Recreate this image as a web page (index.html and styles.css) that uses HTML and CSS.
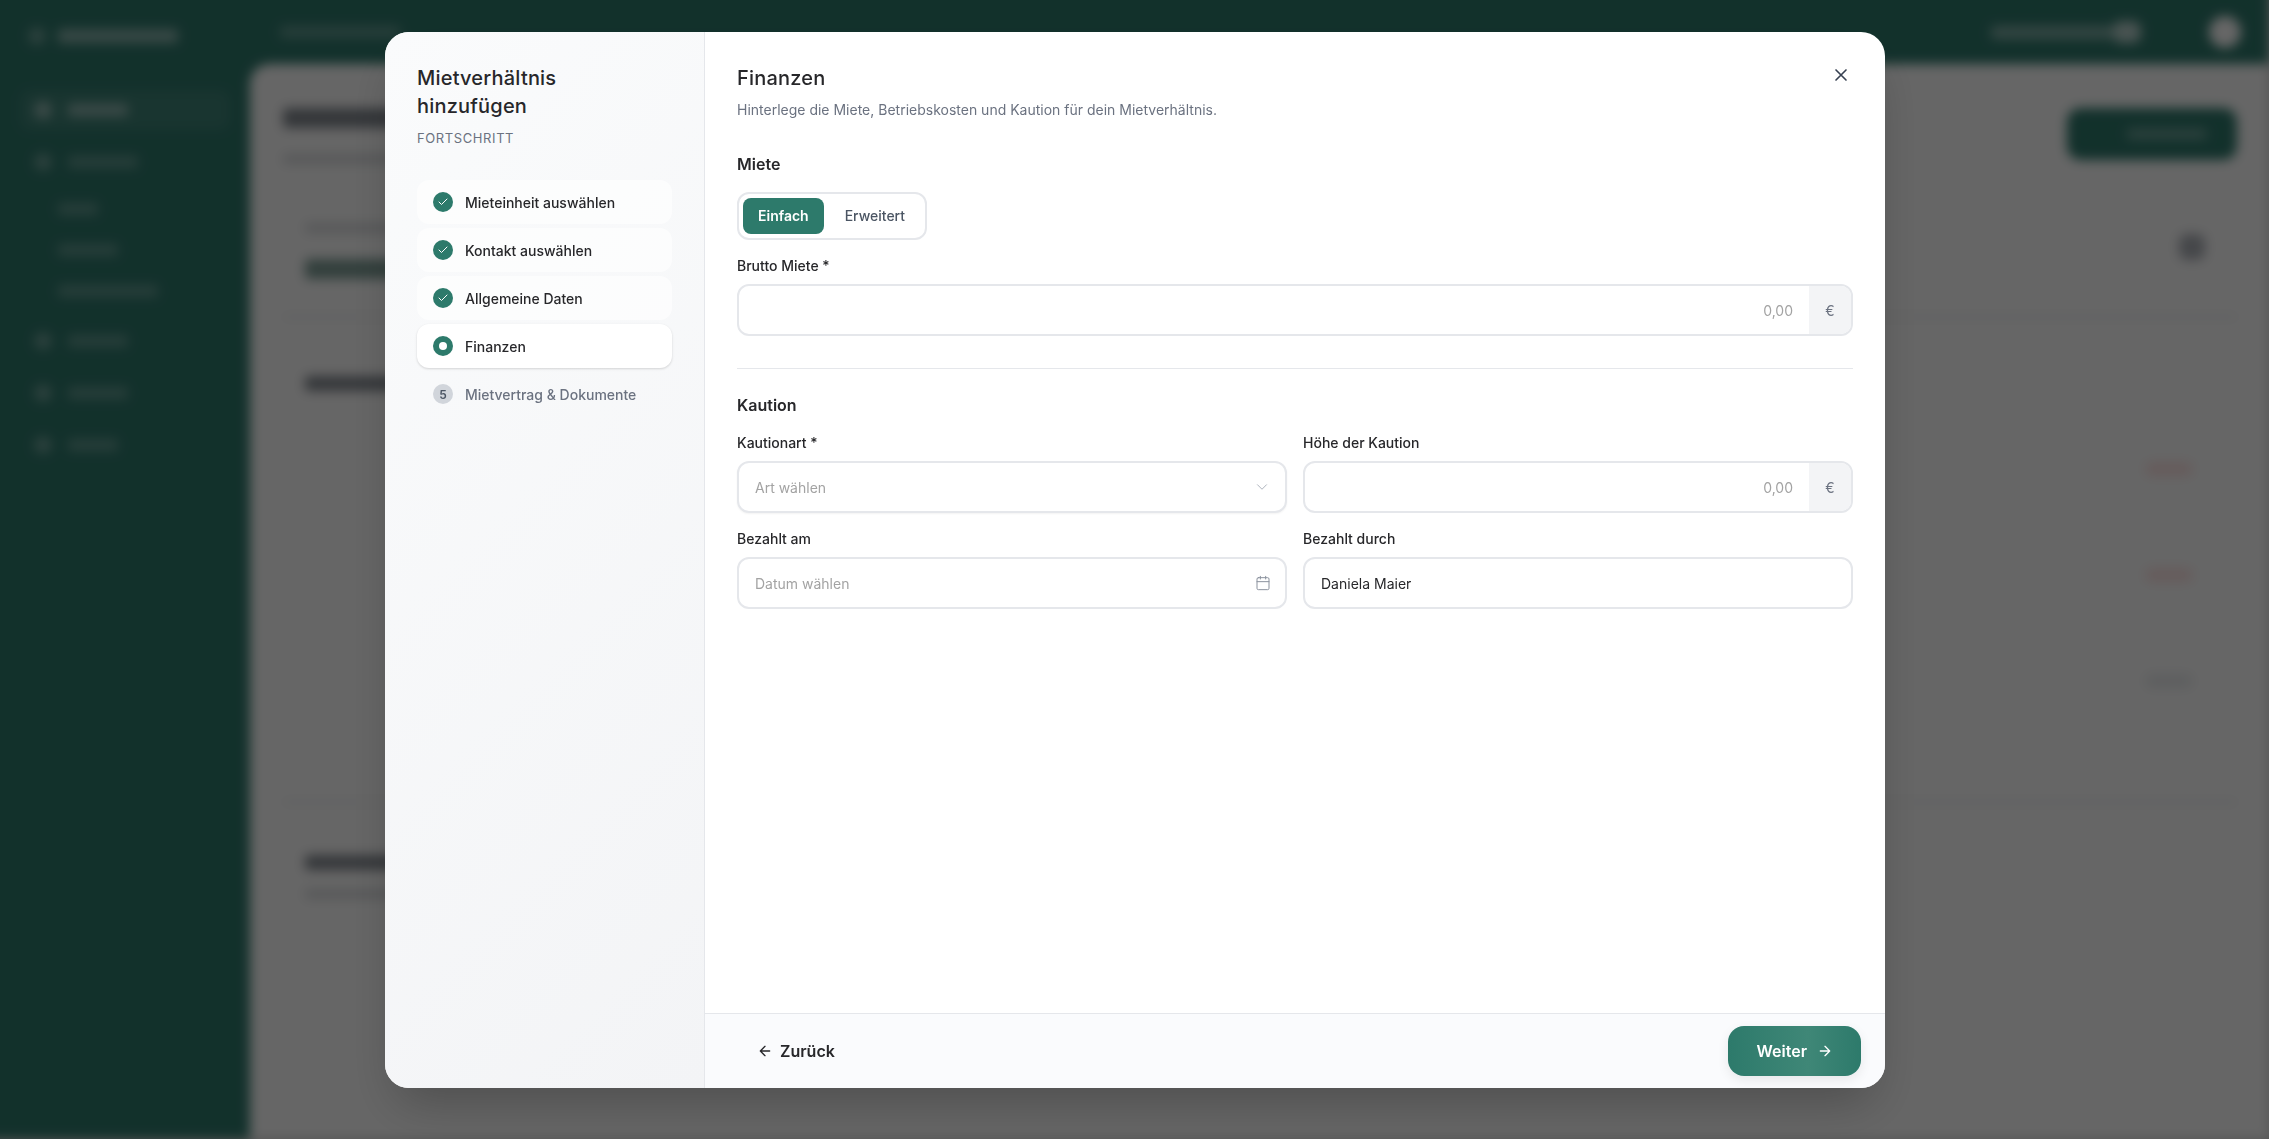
FILE: index.html
```html
<!DOCTYPE html>
<html lang="de">
<head>
    <meta charset="UTF-8">
    <title>Mietverhältnis hinzufügen</title>
    <link rel="stylesheet" href="styles.css">
</head>
<body>

    <!-- page behind the dialog, unreadable under the blur so only bars are drawn -->
    <div class="page" aria-hidden="true">
        <aside class="side">
            <div class="side-logo"><span class="dot"></span><span class="bar w120"></span></div>
            <div class="side-item active"><span class="dot"></span><span class="bar w60"></span></div>
            <div class="side-item"><span class="dot"></span><span class="bar w70"></span></div>
            <div class="side-sub"><span class="bar w40"></span></div>
            <div class="side-sub"><span class="bar w60"></span></div>
            <div class="side-sub"><span class="bar w100"></span></div>
            <div class="side-item"><span class="dot"></span><span class="bar w60"></span></div>
            <div class="side-item"><span class="dot"></span><span class="bar w60"></span></div>
            <div class="side-item"><span class="dot"></span><span class="bar w50"></span></div>
        </aside>
        <div class="page-right">
            <header class="top">
                <span class="bar w120"></span>
                <div class="top-user">
                    <span class="bar w100"></span>
                    <span class="top-badge"></span>
                    <span class="top-avatar"></span>
                </div>
            </header>
            <main class="main">
                <div class="main-head">
                    <div>
                        <div class="main-title"></div>
                        <div class="main-sub"></div>
                    </div>
                    <div class="main-btn"><span class="bar w70"></span></div>
                </div>
                <section class="card card-stat">
                    <div>
                        <div class="main-sub"></div>
                        <div class="stat-num"></div>
                    </div>
                    <span class="stat-icon"></span>
                </section>
                <section class="card card-table">
                    <div class="card-title"></div>
                    <div class="pill red"></div>
                    <div class="pill red"></div>
                    <div class="pill grey"></div>
                </section>
                <section class="card card-last">
                    <div class="card-title"></div>
                    <div class="main-sub"></div>
                </section>
            </main>
        </div>
    </div>
    <div class="overlay"></div>

    <div class="dialog">
        <div class="progress">
            <h2 class="progress-title">Mietverhältnis hinzufügen</h2>
            <div class="progress-label">FORTSCHRITT</div>
            <ul class="steps">
                <li class="step done">
                    <span class="step-icon"><svg viewBox="0 0 24 24" width="12" height="12"><path d="M20 6 9 17l-5-5"/></svg></span>
                    Mieteinheit auswählen
                </li>
                <li class="step done">
                    <span class="step-icon"><svg viewBox="0 0 24 24" width="12" height="12"><path d="M20 6 9 17l-5-5"/></svg></span>
                    Kontakt auswählen
                </li>
                <li class="step done">
                    <span class="step-icon"><svg viewBox="0 0 24 24" width="12" height="12"><path d="M20 6 9 17l-5-5"/></svg></span>
                    Allgemeine Daten
                </li>
                <li class="step current">
                    <span class="step-icon"><span class="step-dot"></span></span>
                    Finanzen
                </li>
                <li class="step todo">
                    <span class="step-icon">5</span>
                    Mietvertrag &amp; Dokumente
                </li>
            </ul>
        </div>

        <div class="content">
            <div class="form">
                <button class="close" type="button" aria-label="Schließen">
                    <svg viewBox="0 0 24 24" width="20" height="20"><path d="M18 6 6 18M6 6l12 12"/></svg>
                </button>
                <h2 class="form-title">Finanzen</h2>
                <p class="form-sub">Hinterlege die Miete, Betriebskosten und Kaution für dein Mietverhältnis.</p>

                <div class="section">
                    <h3>Miete</h3>
                    <div class="toggle">
                        <span class="toggle-opt on">Einfach</span>
                        <span class="toggle-opt">Erweitert</span>
                    </div>
                    <label class="label">Brutto Miete *</label>
                    <div class="input">
                        <span class="value right placeholder">0,00</span>
                        <span class="addon">€</span>
                    </div>
                </div>

                <div class="section deposit">
                    <h3>Kaution</h3>
                    <div class="grid">
                        <div>
                            <label class="label">Kautionart *</label>
                            <div class="input raised">
                                <span class="value placeholder">Art wählen</span>
                                <svg class="input-icon chevron" viewBox="0 0 24 24" width="18" height="18"><path d="m6 9 6 6 6-6"/></svg>
                            </div>
                        </div>
                        <div>
                            <label class="label">Höhe der Kaution</label>
                            <div class="input">
                                <span class="value right placeholder">0,00</span>
                                <span class="addon">€</span>
                            </div>
                        </div>
                        <div>
                            <label class="label">Bezahlt am</label>
                            <div class="input">
                                <span class="value placeholder">Datum wählen</span>
                                <svg class="input-icon" viewBox="0 0 24 24" width="16" height="16"><path d="M8 2v4M16 2v4"/><rect x="3" y="4" width="18" height="18" rx="2"/><path d="M3 10h18"/></svg>
                            </div>
                        </div>
                        <div>
                            <label class="label">Bezahlt durch</label>
                            <div class="input">
                                <span class="value">Daniela Maier</span>
                            </div>
                        </div>
                    </div>
                </div>
            </div>

            <div class="footer">
                <button class="btn-back" type="button">
                    <svg viewBox="0 0 24 24" width="16" height="16"><path d="m12 19-7-7 7-7M19 12H5"/></svg>
                    Zurück
                </button>
                <button class="btn-next" type="button">
                    Weiter
                    <svg viewBox="0 0 24 24" width="16" height="16"><path d="M5 12h14M12 5l7 7-7 7"/></svg>
                </button>
            </div>
        </div>
    </div>

</body>
</html>
```

FILE: styles.css
```css
* {
    box-sizing: border-box;
}
html, body {
    height: 100%;
}
body {
    margin: 0;
    overflow: hidden;
    font-family: Inter, "Liberation Sans", sans-serif;
    font-size: 14px;
    color: #27272a;
    background: #d4d4d4;
}
svg {
    fill: none;
    stroke: currentColor;
    stroke-width: 2;
    stroke-linecap: round;
    stroke-linejoin: round;
    flex-shrink: 0;
}

/* blurred page, pulled out past the top and left so the blur has no edge there */
.page {
    display: flex;
    width: calc(100vw + 16px);
    height: calc(100vh + 16px);
    margin: -16px 0 0 -16px;
    background: #2f7a6d;
    filter: blur(6px);
}
.side {
    width: 266px;
    flex-shrink: 0;
    padding: 40px 20px 0 36px;
}
.side-logo {
    display: flex;
    align-items: center;
    gap: 12px;
    height: 24px;
    margin: 0 8px 42px;
}
.side-logo .bar {
    height: 14px;
    background: #ffffff;
    opacity: 0.45;
}
.side-item {
    display: flex;
    align-items: center;
    gap: 16px;
    height: 40px;
    padding-left: 14px;
    margin-bottom: 12px;
    border-radius: 10px;
}
.side-item.active {
    background: rgba(255, 255, 255, 0.08);
}
.side-item + .side-sub {
    margin-top: -6px;
}
.side-sub + .side-item {
    margin-top: 10px;
}
.side-sub {
    display: flex;
    align-items: center;
    height: 41px;
    padding-left: 38px;
}
.dot {
    width: 18px;
    height: 18px;
    border-radius: 50%;
    background: rgba(255, 255, 255, 0.3);
}
.bar {
    display: block;
    height: 12px;
    border-radius: 3px;
    background: rgba(255, 255, 255, 0.25);
}
.active .bar {
    background: rgba(255, 255, 255, 0.45);
}
.active .dot {
    background: rgba(255, 255, 255, 0.45);
}
.w40 { width: 40px; }
.w50 { width: 50px; }
.w60 { width: 60px; }
.w70 { width: 70px; }
.w100 { width: 100px; }
.w120 { width: 120px; }

.page-right {
    flex: 1;
    display: flex;
    flex-direction: column;
    min-width: 0;
}
.top {
    display: flex;
    align-items: center;
    justify-content: space-between;
    height: 80px;
    flex-shrink: 0;
    padding: 16px 28px 0 30px;
}
.top-user {
    display: flex;
    align-items: center;
}
.top-user .bar {
    width: 122px;
    height: 13px;
    background: rgba(255, 255, 255, 0.4);
}
.top-badge {
    width: 28px;
    height: 22px;
    border-radius: 8px;
    background: rgba(255, 255, 255, 0.65);
    margin-right: 68px;
}
.top-avatar {
    width: 32px;
    height: 32px;
    border-radius: 50%;
    background: #ffffff;
}
.main {
    flex: 1;
    min-height: 0;
    background: #ffffff;
    border-radius: 20px 0 0 0;
    padding: 44px 32px 0 33px;
}
.main-head {
    display: flex;
    justify-content: space-between;
    height: 115px;
}
.main-title {
    width: 320px;
    height: 20px;
    border-radius: 4px;
    background: #1f2937;
    opacity: 0.55;
}
.main-sub {
    width: 320px;
    height: 10px;
    margin-top: 26px;
    border-radius: 4px;
    background: #6b7280;
    opacity: 0.25;
}
.main-btn {
    display: flex;
    align-items: center;
    justify-content: center;
    width: 170px;
    height: 52px;
    border-radius: 14px;
    background: #2f7a6d;
}
.main-btn .bar {
    width: 80px;
    margin-left: 30px;
    background: rgba(255, 255, 255, 0.28);
}
.card {
    border-bottom: 2px solid #e0e2e6;
}
.card-stat {
    display: flex;
    justify-content: space-between;
    height: 95px;
    padding: 0 32px 0 22px;
}
.card-stat .main-sub {
    margin-top: 0;
    width: 240px;
}
.stat-num {
    width: 400px;
    height: 20px;
    margin-top: 26px;
    border-radius: 4px;
    background: #2a5f54;
    opacity: 0.6;
}
.stat-icon {
    width: 26px;
    height: 26px;
    margin-top: 11px;
    border-radius: 8px;
    background: #6b7280;
    opacity: 0.55;
}
.card-table {
    height: 485px;
    padding: 58px 0 0 22px;
}
.card-title {
    width: 320px;
    height: 15px;
    border-radius: 4px;
    background: #1f2937;
    opacity: 0.55;
}
.pill {
    width: 48px;
    height: 14px;
    margin-left: auto;
    margin-right: 44px;
    border-radius: 7px;
}
.pill.red {
    background: #fca5a5;
    opacity: 0.3;
}
.pill.grey {
    background: #9ca3af;
    opacity: 0.2;
}
.card-table .pill:nth-child(2) { margin-top: 71px; }
.card-table .pill:nth-child(3),
.card-table .pill:nth-child(4) { margin-top: 92px; }
.card-last {
    border: 0;
    padding: 52px 0 0 22px;
}
.card-last .main-sub {
    margin-top: 19px;
}
.overlay {
    position: fixed;
    inset: 0;
    background: rgba(0, 0, 0, 0.6);
}

/* dialog */
.dialog {
    position: fixed;
    left: 385px;
    top: 32px;
    display: flex;
    width: 1500px;
    height: 1056px;
    border-radius: 24px;
    background: #ffffff;
    overflow: hidden;
    box-shadow: 0 25px 50px -12px rgba(0, 0, 0, 0.25);
}
.progress {
    width: 320px;
    flex-shrink: 0;
    padding: 32px;
    background: linear-gradient(135deg, #fafbfc, #f3f4f6);
    border-right: 1px solid #e5e7eb;
}
.progress-title {
    max-width: 200px;
    margin: 0;
    font-size: 20px;
    line-height: 28px;
    font-weight: 500;
    letter-spacing: 0.2px;
}
.progress-label {
    margin-top: 8px;
    font-size: 13px;
    line-height: 20px;
    letter-spacing: 0.6px;
    color: #6b7280;
}
.steps {
    list-style: none;
    margin: 32px 0 0;
    padding: 0;
}
.step {
    display: flex;
    align-items: center;
    gap: 12px;
    height: 44px;
    margin-bottom: 4px;
    padding-left: 16px;
    border-radius: 12px;
    font-weight: 500;
}
.step.done {
    background: rgba(255, 255, 255, 0.6);
}
.step.current {
    background: #ffffff;
    box-shadow: 0 1px 3px rgba(0, 0, 0, 0.1), 0 1px 2px rgba(0, 0, 0, 0.06);
}
.step.todo {
    color: #6b7280;
}
.step-icon {
    display: flex;
    align-items: center;
    justify-content: center;
    width: 20px;
    height: 20px;
    border-radius: 50%;
    background: #2d7a6b;
    color: #ffffff;
}
.step-dot {
    width: 8px;
    height: 8px;
    border-radius: 50%;
    background: #ffffff;
}
.todo .step-icon {
    background: #d1d5db;
    color: #4b5563;
    font-size: 12px;
    font-weight: 600;
}

.content {
    flex: 1;
    display: flex;
    flex-direction: column;
    min-width: 0;
}
.form {
    position: relative;
    flex: 1;
    padding: 32px;
}
.close {
    position: absolute;
    top: 33px;
    right: 34px;
    display: flex;
    padding: 0;
    border: 0;
    background: none;
    color: #374151;
}
.form-title {
    margin: 0;
    font-size: 20px;
    line-height: 28px;
    font-weight: 500;
    letter-spacing: 0.2px;
}
.form-sub {
    margin: 8px 0 0;
    line-height: 20px;
    color: #6b7280;
}
.section {
    margin-top: 32px;
}
.section h3 {
    margin: 0 0 16px;
    font-size: 16px;
    line-height: 24px;
    font-weight: 600;
}
.deposit {
    padding-top: 24px;
    border-top: 1px solid #e5e7eb;
}
.toggle {
    display: inline-flex;
    gap: 5px;
    padding: 4px;
    border: 2px solid #e5e7eb;
    border-radius: 12px;
    vertical-align: top;
}
.toggle-opt {
    height: 36px;
    padding: 0 16px;
    line-height: 36px;
    border-radius: 8px;
    font-weight: 500;
    color: #4b5563;
}
.toggle-opt.on {
    padding: 0 15px;
    background: #2d7a6b;
    color: #ffffff;
    font-weight: 600;
}
.label {
    display: block;
    margin-bottom: 8px;
    line-height: 20px;
    font-weight: 500;
}
.toggle + .label {
    margin-top: 16px;
}
.input {
    display: flex;
    align-items: center;
    height: 52px;
    border: 2px solid #e5e7eb;
    border-radius: 12px;
    overflow: hidden;
    background: #ffffff;
}
.input.raised {
    box-shadow: 0 1px 2px rgba(0, 0, 0, 0.05);
}
.value {
    flex: 1;
    padding: 0 16px;
}
.value.right {
    text-align: right;
}
.placeholder {
    color: #a3a3a3;
}
.addon {
    display: flex;
    align-items: center;
    justify-content: center;
    width: 42px;
    height: 100%;
    background: #f3f4f6;
    color: #6b7280;
}
.input-icon {
    margin-right: 14px;
    color: #8b929e;
    stroke-width: 1.5;
}
.input-icon.chevron {
    color: #a8aeb8;
    stroke-width: 1.25;
}
.grid {
    display: grid;
    grid-template-columns: 1fr 1fr;
    gap: 16px;
}

.footer {
    display: flex;
    align-items: center;
    justify-content: space-between;
    height: 75px;
    padding: 0 24px;
    border-top: 1px solid #e5e7eb;
    background: #fafbfd;
}
.btn-back, .btn-next {
    display: flex;
    align-items: center;
    height: 50px;
    border: 0;
    font-family: inherit;
    font-size: 16px;
    font-weight: 600;
}
.btn-back {
    gap: 7px;
    padding: 0 27px 0 28px;
    background: none;
    color: #27272a;
}
.btn-next {
    gap: 10px;
    padding: 0 28px 0 29px;
    border-radius: 16px;
    background: linear-gradient(90deg, #2d7a6b 0%, #3f8777 60%, #2d7a6b 100%);
    color: #ffffff;
    box-shadow: 0 4px 12px rgba(0, 0, 0, 0.08);
}
```
